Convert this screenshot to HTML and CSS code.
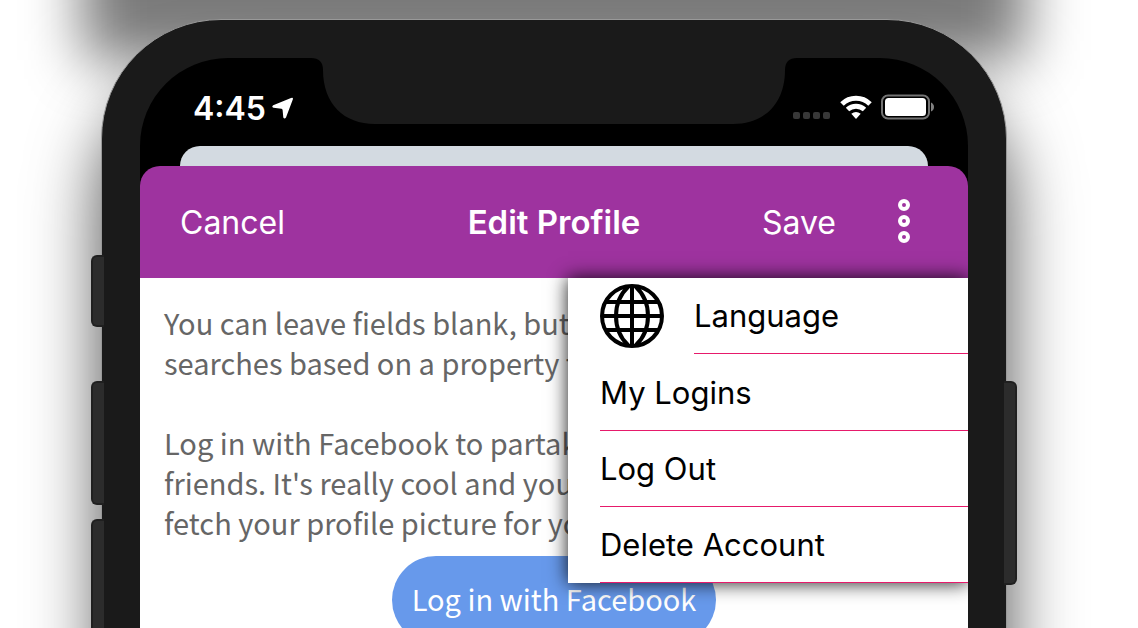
FILE: index.html
```html
<!DOCTYPE html>
<html lang="en">
<head>
<meta charset="utf-8">
<title>Edit Profile</title>
<link rel="stylesheet" href="styles.css">
</head>
<body>
<main class="stage">
  <div class="phone">
    <span class="side-key key-mute"></span>
    <span class="side-key key-up"></span>
    <span class="side-key key-down"></span>
    <span class="side-key key-power"></span>
    <div class="screen">
      <div class="status-bar">
        <div class="status-time">
          <span>4:45</span>
          <svg width="22" height="22" viewBox="0 0 22 22" aria-hidden="true"><path d="M19 1Q21.500 0 20.800 2.500L14 20.500Q12.500 22.500 11.300 20.500L10.600 13Q10.500 12 9.500 11.800L1.500 10.700Q-.8 9.600 1.200 8.200Z" fill="#fff"/></svg>
        </div>
        <svg class="notch" width="486" height="66" viewBox="0 0 486 66" aria-hidden="true"><path d="M0 0C8 0 12 4 12 12C12 46 33 66 64 66H422C453 66 474 46 474 12C474 4 478 0 486 0Z" fill="#1a1a1a"/></svg>
        <div class="status-icons">
          <svg width="38" height="7" viewBox="0 0 38 7" aria-hidden="true"><g fill="#383838"><rect width="7" height="7" rx="2"/><rect x="10" width="7" height="7" rx="2"/><rect x="20" width="7" height="7" rx="2"/><rect x="30" width="7" height="7" rx="2"/></g></svg>
          <svg width="32" height="24" viewBox="0 0 32 24" aria-hidden="true"><g fill="none" stroke="#fff" stroke-width="5"><path d="M2 9A20 20 0 0 1 30 9"/><path d="M7.500 14.500A12.500 12.500 0 0 1 24.500 14.500"/></g><path d="M11.300 18.800Q16 15 20.700 18.800L16 24Z" fill="#fff"/></svg>
          <svg width="54" height="26" viewBox="0 0 54 26" aria-hidden="true"><rect x="1" y="1.500" width="47" height="23" rx="6" fill="none" stroke="#737373" stroke-width="2"/><rect x="4" y="4" width="41" height="18" rx="3.500" fill="#fff"/><path d="M50 8.500Q53 10 53 13T50 17.500Z" fill="#808080"/></svg>
        </div>
      </div>
      <div class="back-card"></div>
      <header class="title-bar">
        <button class="bar-button cancel" type="button">Cancel</button>
        <h1 class="title">Edit Profile</h1>
        <div class="bar-actions">
          <button class="bar-button" type="button">Save</button>
          <button class="bar-button more" type="button" aria-label="More options">
            <svg width="12" height="46" viewBox="0 0 12 46" aria-hidden="true"><g fill="none" stroke="#fff" stroke-width="4"><circle cx="6" cy="6" r="4"/><circle cx="6" cy="22" r="4"/><circle cx="6" cy="38" r="4"/></g></svg>
          </button>
        </div>
      </header>
      <section class="content">
        <p class="note">You can leave fields blank, but<br>searches based on a property that</p>
        <p class="note">Log in with Facebook to partake<br>friends. It's really cool and you<br>fetch your profile picture for you</p>
        <button class="facebook" type="button">Log in with Facebook</button>
        <nav class="menu" aria-label="Profile menu">
          <button class="menu-item with-icon" type="button">
            <svg width="64" height="64" viewBox="0 0 64 64" aria-hidden="true"><g fill="none" stroke="#000" stroke-width="4"><circle cx="32" cy="32" r="30"/><path d="M32 2V62M2 32H62M5 18H59M5 46H59"/><path d="M28 3C12 18 12 46 28 61M36 3C52 18 52 46 36 61"/></g></svg>
            <span class="menu-label">Language</span>
          </button>
          <button class="menu-item" type="button"><span class="menu-label">My Logins</span></button>
          <button class="menu-item" type="button"><span class="menu-label">Log Out</span></button>
          <button class="menu-item" type="button"><span class="menu-label">Delete Account</span></button>
        </nav>
      </section>
    </div>
  </div>
</main>
</body>
</html>
```
FILE: styles.css
```css
* { box-sizing: border-box; }

body {
  margin: 0;
  background: #fff;
  font-family: Inter, "Liberation Sans", sans-serif;
  font-size: 32px;
}

button {
  border: 0;
  padding: 0;
  background: none;
  color: inherit;
  font: inherit;
}

svg { display: block; flex: none; }

.stage {
  position: relative;
  height: 100vh;
  overflow: hidden;
  padding: 19px 131px 0 101px;
}

/* Soft shade that falls from above the device */
.stage::before {
  content: "";
  position: absolute;
  top: -150px;
  left: 82px;
  right: 112px;
  height: 210px;
  background: rgba(0, 0, 0, .52);
  filter: blur(28px);
}

.phone {
  position: relative;
  min-height: 130vh;
  padding: 38px;
  border: 1px solid #999;
  border-radius: 120px;
  background: #1a1a1a;
  box-shadow: 0 60px 70px rgba(0, 0, 0, .7);
}

.side-key {
  position: absolute;
  left: -11px;
  width: 13px;
  border: 2px solid #202020;
  border-right: 0;
  border-radius: 6px 0 0 6px;
  background: #2c2c2c;
}

.key-mute { top: 235px; height: 72px; }
.key-up { top: 361px; height: 124px; }
.key-down { top: 499px; height: 124px; }

.key-power {
  top: 361px;
  left: auto;
  right: -11px;
  height: 204px;
  border: 2px solid #202020;
  border-left: 0;
  border-radius: 0 6px 6px 0;
}

.screen {
  min-height: 120vh;
  border-radius: 88px;
  overflow: hidden;
  background: #000;
}

.status-bar {
  display: grid;
  grid-template-columns: minmax(0, 1fr) auto minmax(0, 1fr);
  height: 88px;
}

.status-time {
  display: flex;
  align-items: center;
  gap: 6px;
  height: 100px;
  padding-left: 53px;
  color: #fff;
  font-weight: 600;
}

.status-icons {
  display: flex;
  align-items: center;
  justify-content: flex-end;
  gap: 9px;
  height: 98px;
  padding-right: 33px;
}

.status-icons svg:first-child { margin-top: 16px; }

.back-card {
  height: 20px;
  margin: 0 40px;
  border-radius: 20px 20px 0 0;
  background: #d3dae1;
}

.title-bar {
  display: grid;
  grid-template-columns: 1fr auto 1fr;
  align-items: center;
  height: 112px;
  padding: 0 40px;
  border-radius: 20px 20px 0 0;
  background: #9e339f;
  color: #fff;
}

.cancel { justify-self: start; }

.title {
  margin: 0;
  font-size: 33px;
  font-weight: 600;
}

.bar-actions {
  display: flex;
  align-items: center;
  justify-content: flex-end;
  gap: 62px;
  padding-right: 18px;
}

.content {
  position: relative;
  display: flex;
  flex-direction: column;
  min-height: 100vh;
  padding: 24px;
  background: #fff;
}

.note {
  margin: 0 0 40px;
  color: #666;
  font-family: "Noto Sans CJK SC", sans-serif;
  font-size: 29px;
  line-height: 40px;
  white-space: nowrap;
}

.note + .note { margin-bottom: 14px; }

.facebook {
  align-self: center;
  height: 88px;
  padding: 0 20px 4px;
  border-radius: 44px;
  background: #6799eb;
  color: #fff;
  font-family: "Noto Sans CJK SC", sans-serif;
  font-size: 29px;
}

.menu {
  position: absolute;
  top: 0;
  right: 0;
  width: 400px;
  padding-left: 32px;
  background: #fff;
  box-shadow: 0 0 18px rgba(0, 0, 0, .9);
}

.menu-item {
  display: flex;
  align-items: center;
  width: 100%;
  height: 76px;
  color: #000;
  font-size: 31px;
}

.with-icon {
  gap: 30px;
  margin-bottom: 1px;
}

.menu-label {
  display: flex;
  flex: 1;
  align-items: center;
  height: 100%;
  border-bottom: 1px solid #e61a6b;
}
```
